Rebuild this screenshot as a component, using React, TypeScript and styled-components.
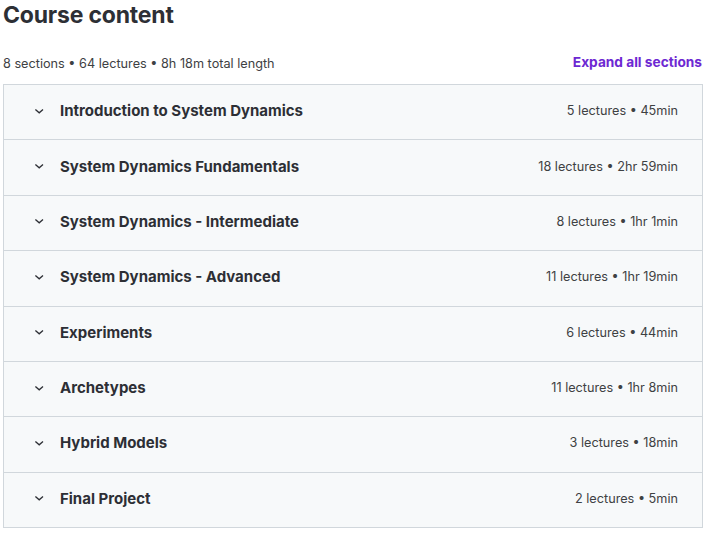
import React from "react";
import styled, { createGlobalStyle } from "styled-components";

const Global = createGlobalStyle`
  html, body { margin: 0; padding: 0; background: #ffffff; }
  body { font-family: Inter, "Noto Sans", sans-serif; color: #2d2f31; }
`;

const Page = styled.div`
  padding: 0 4px 0 3px;
  width: 700px;
`;

const Title = styled.h2`
  margin: 0;
  font-size: 23px;
  line-height: 30px;
  font-weight: 700;
  letter-spacing: -0.2px;
  color: #2d2f35;
`;

const Summary = styled.div`
  display: flex;
  justify-content: space-between;
  align-items: center;
  margin-top: 21px;
  height: 24px;
  margin-bottom: 9px;
`;

const Stats = styled.span`
  font-size: 12.7px;
  color: #3e4143;
`;

const ExpandButton = styled.button`
  border: none;
  background: none;
  padding: 0;
  margin-right: 1px;
  margin-top: -3px;
  font-family: inherit;
  font-size: 13.7px;
  font-weight: 700;
  color: #6d28d2;
  cursor: pointer;
`;

const Accordion = styled.div`
  border: 1px solid #d1d7dc;
  border-bottom: none;
`;

const Row = styled.div`
  display: flex;
  align-items: center;
  height: 55.375px;
  box-sizing: border-box;
  padding: 0 24px 3px 30px;
  background: #f7f9fa;
  border-bottom: 1px solid #d1d7dc;
`;

const Chevron = styled.svg`
  width: 12px;
  height: 12px;
  flex: none;
  margin-right: 14px;
`;

const SectionTitle = styled.span`
  flex: 1;
  font-size: 15px;
  font-weight: 700;
  color: #2d2f35;
`;

const Meta = styled.span`
  font-size: 12.7px;
  color: #3e4143;
`;

const sections: [string, string][] = [
  ["Introduction to System Dynamics", "5 lectures • 45min"],
  ["System Dynamics Fundamentals", "18 lectures • 2hr 59min"],
  ["System Dynamics - Intermediate", "8 lectures • 1hr 1min"],
  ["System Dynamics - Advanced", "11 lectures • 1hr 19min"],
  ["Experiments", "6 lectures • 44min"],
  ["Archetypes", "11 lectures • 1hr 8min"],
  ["Hybrid Models", "3 lectures • 18min"],
  ["Final Project", "2 lectures • 5min"],
];

export default function App() {
  return (
    <Page>
      <Global />
      <Title>Course content</Title>
      <Summary>
        <Stats>8 sections • 64 lectures • 8h 18m total length</Stats>
        <ExpandButton>Expand all sections</ExpandButton>
      </Summary>
      <Accordion>
        {sections.map(([t, m]) => (
          <Row key={t}>
            <Chevron viewBox="0 0 12 12">
              <path d="M1.4 4.4 L5.2 7.8 L9 4.4" fill="none" stroke="#2d2f35" strokeWidth="1.3" />
            </Chevron>
            <SectionTitle>{t}</SectionTitle>
            <Meta>{m}</Meta>
          </Row>
        ))}
      </Accordion>
    </Page>
  );
}
